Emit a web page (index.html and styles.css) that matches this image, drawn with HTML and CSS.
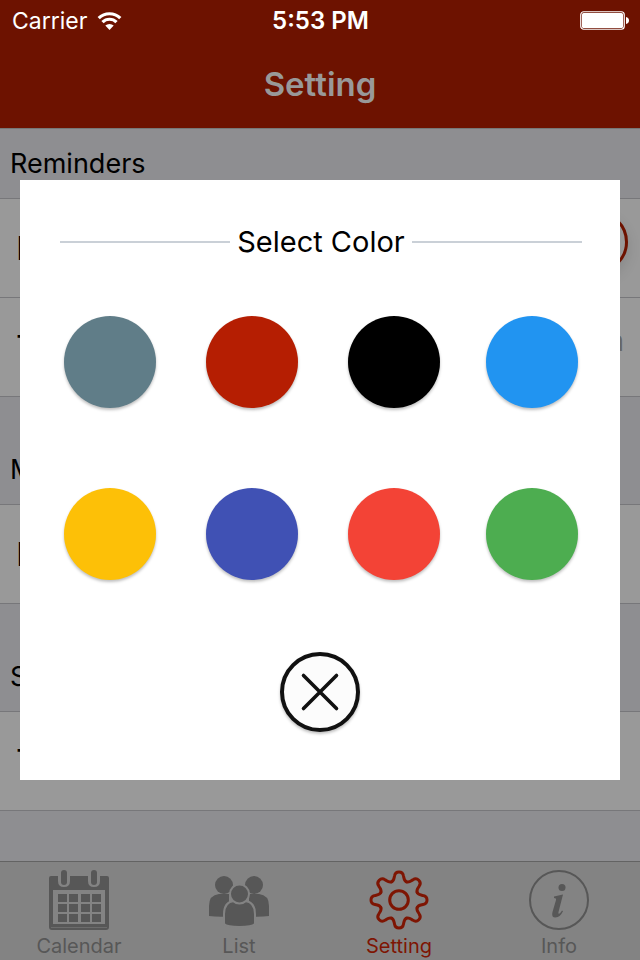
FILE: index.html
```html
<!DOCTYPE html>
<html lang="en">
<head>
<meta charset="utf-8">
<meta name="viewport" content="width=device-width, initial-scale=1">
<title>Setting</title>
<link rel="stylesheet" href="styles.css">
</head>
<body>
<div class="app">
  <header class="top">
    <div class="status">
      <div class="carrier">
        <span>Carrier</span>
        <svg class="wifi" viewBox="0 0 24 18" aria-hidden="true">
          <path d="M1.200 6.200a15.300 15.300 0 0 1 21.600 0M5 10.200a9.800 9.800 0 0 1 14 0" fill="none" stroke="currentColor" stroke-width="3.200"/>
          <path d="M12 18 7.800 13.600a6 6 0 0 1 8.400 0z" fill="currentColor"/>
        </svg>
      </div>
      <span class="time">5:53 PM</span>
      <svg class="battery" viewBox="0 0 49 19" aria-hidden="true">
        <rect x=".75" y=".75" width="43.500" height="17.500" rx="3" fill="none" stroke="currentColor" stroke-width="1.200"/>
        <rect x="2" y="2" width="41" height="15" rx="1.500" fill="currentColor"/>
        <path d="M46 6q3 .8 3 3.500T46 13z" fill="currentColor"/>
      </svg>
    </div>
    <h1 class="title">Setting</h1>
  </header>

  <main class="settings">
    <h2 class="section first">Reminders</h2>
    <div class="row">
      <label for="enabled">E</label>
      <input class="switch" id="enabled" type="checkbox">
    </div>
    <div class="row">
      <span>T</span>
      <span class="value">m</span>
    </div>
    <h2 class="section">M</h2>
    <div class="row"><span>E</span></div>
    <h2 class="section">S</h2>
    <div class="row"><span>T</span></div>
  </main>

  <nav class="tabs">
    <a class="tab" href="#calendar">
      <svg class="icon" viewBox="0 0 60 60" aria-hidden="true">
        <path fill="currentColor" fill-rule="evenodd" d="M2 6h7v5q0 6 6 6t6-6V6h18v5q0 6 6 6t6-6V6h7q2 0 2 2v49q0 3-3 3H3q-3 0-3-3V8q0-2 2-2zM4 20v34h52V20z"/>
        <rect x="12" y="0" width="6" height="15" rx="3" fill="currentColor"/>
        <rect x="42" y="0" width="6" height="15" rx="3" fill="currentColor"/>
        <path fill="currentColor" d="M9 24h9v8H9zM20 24h9v8h-9zM32 24h9v8h-9zM43 24h9v8h-9zM9 34h9v8H9zM20 34h9v8h-9zM32 34h9v8h-9zM43 34h9v8h-9zM9 44h9v8H9zM20 44h9v8h-9zM32 44h9v8h-9zM43 44h9v8h-9z"/>
        <path d="M2 57.500h56" stroke="#6c6c6c" stroke-width="1"/>
      </svg>
      <span>Calendar</span>
    </a>
    <a class="tab" href="#list">
      <svg class="icon" viewBox="0 0 60 60" aria-hidden="true">
        <g fill="currentColor">
          <circle cx="15" cy="15" r="9"/>
          <circle cx="45" cy="15" r="9"/>
          <path d="M0 46V36q0-11 10-12h10v22.500Q8 47 0 46zM60 46V36q0-11-10-12H40v22.500Q52 47 60 46z"/>
        </g>
        <g fill="currentColor" stroke="#838383" stroke-width="2">
          <path d="M15 54V44q0-12 10-13h11q10 1 10 13v10q-3 3-15.500 3T15 54z"/>
          <circle cx="30.500" cy="24" r="9.500"/>
        </g>
      </svg>
      <span>List</span>
    </a>
    <a class="tab active" href="#setting" aria-current="page">
      <svg class="icon" viewBox="-30 -30 60 60" aria-hidden="true">
        <defs>
          <path id="tooth" d="M-7.500-18.200C-5-19.200-5-22-4.500-24-4-27-2.500-28 0-28S4-27 4.500-24C5-22 5-19.200 7.500-18.200"/>
        </defs>
        <g fill="none" stroke="currentColor" stroke-width="3" stroke-linecap="round">
          <use href="#tooth"/>
          <use href="#tooth" transform="rotate(45)"/>
          <use href="#tooth" transform="rotate(90)"/>
          <use href="#tooth" transform="rotate(135)"/>
          <use href="#tooth" transform="rotate(180)"/>
          <use href="#tooth" transform="rotate(225)"/>
          <use href="#tooth" transform="rotate(270)"/>
          <use href="#tooth" transform="rotate(315)"/>
          <circle r="9.300"/>
        </g>
      </svg>
      <span>Setting</span>
    </a>
    <a class="tab" href="#info">
      <svg class="icon" viewBox="0 0 60 60" aria-hidden="true">
        <circle cx="30" cy="30" r="29" fill="none" stroke="currentColor" stroke-width="2"/>
        <circle cx="33" cy="17.500" r="3.500" fill="currentColor"/>
        <path d="M25 26.500 34 24.500 29.500 42q-.5 2.500 1 1.500t2.500-3l1 .8q-3 6.200-7.500 6.200t-3-5.500L27 30q.5-2-2-2z" fill="currentColor"/>
      </svg>
      <span>Info</span>
    </a>
  </nav>

  <section class="dialog" role="dialog" aria-labelledby="dialog-title">
    <h2 class="dialog-title" id="dialog-title">Select Color</h2>
    <div class="swatches">
      <button class="swatch slate" type="button" aria-label="Slate"></button>
      <button class="swatch crimson" type="button" aria-label="Crimson"></button>
      <button class="swatch black" type="button" aria-label="Black"></button>
      <button class="swatch blue" type="button" aria-label="Blue"></button>
      <button class="swatch amber" type="button" aria-label="Amber"></button>
      <button class="swatch indigo" type="button" aria-label="Indigo"></button>
      <button class="swatch red" type="button" aria-label="Red"></button>
      <button class="swatch green" type="button" aria-label="Green"></button>
    </div>
    <button class="close" type="button" aria-label="Close">
      <svg viewBox="0 0 40 40" aria-hidden="true">
        <path d="M3.500 3.500l33 33M36.500 3.500l-33 33" fill="none" stroke="currentColor" stroke-width="3.600" stroke-linecap="round"/>
      </svg>
    </button>
  </section>
</div>
</body>
</html>
```

FILE: styles.css
```css
* { box-sizing: border-box; }

body {
  margin: 0;
  font-family: Inter, Roboto, "Liberation Sans", sans-serif;
  color: #000;
  background: #8e8e91;
}

h1, h2 { margin: 0; font-weight: 400; }

.app {
  position: relative;
  display: flex;
  flex-direction: column;
  min-height: 100vh;
}

/* Navigation bar */
.top {
  background: #6d1200;
  border-bottom: 1px solid #777;
}

.status {
  display: grid;
  grid-template-columns: 1fr auto 1fr;
  align-items: center;
  height: 41px;
  padding: 0 11px 0 12px;
  color: #fff;
  font-size: 24px;
}

.carrier {
  display: flex;
  align-items: center;
  gap: 10px;
  font-size: 23px;
}

.wifi { width: 25px; height: 18px; }
.time { font-weight: 600; }
.battery { width: 49px; height: 19px; justify-self: end; }

.title {
  padding: 22px 0 23px;
  color: #999;
  font-size: 33px;
  font-weight: 600;
  line-height: 42px;
  text-align: center;
}

/* Settings list */
.settings { flex: 1; }

.section {
  padding: 56px 10px 17px;
  border-bottom: 1px solid #77777a;
  font-size: 27px;
  line-height: 34px;
}

.section.first { padding-top: 18px; }

.row {
  display: flex;
  justify-content: space-between;
  align-items: center;
  height: 99px;
  padding: 0 12px 0 16px;
  border-bottom: 1px solid #77777a;
  background: #999;
  font-size: 33px;
}

.value {
  padding: 0 4px 12px 0;
  color: #666;
  font-size: 28px;
}

.switch {
  appearance: none;
  width: 102px;
  height: 62px;
  margin: 0 0 12px;
  border: 3px solid #6d1200;
  border-radius: 31px;
  background: #999;
  box-shadow: 0 6px 14px rgba(0, 0, 0, 0.12);
}

/* Tab bar */
.tabs {
  display: grid;
  grid-template-columns: repeat(4, 1fr);
  height: 99px;
  border-top: 1px solid #636363;
  background: #838383;
}

.tab {
  display: flex;
  flex-direction: column;
  align-items: center;
  gap: 4px;
  padding: 8px 2px 0 0;
  color: #575757;
  font-size: 20px;
  line-height: 24px;
  text-decoration: none;
}

.tab.active { color: #7e1503; }
.icon { width: 60px; height: 60px; }

/* Color picker */
.dialog {
  position: absolute;
  top: 180px;
  left: 20px;
  right: 20px;
  display: flex;
  flex-direction: column;
  padding: 44px 38px 48px 40px;
  background: #fff;
}

.dialog-title {
  display: flex;
  align-items: center;
  gap: 7px;
  font-size: 29px;
  line-height: 36px;
}

.dialog-title::before,
.dialog-title::after {
  content: "";
  flex: 1;
  height: 2px;
  background: #cad0d7;
}

.swatches {
  display: grid;
  grid-template-columns: 71fr 71fr 69fr 92px;
  row-gap: 80px;
  margin: 56px 4px 72px;
}

.swatch {
  width: 92px;
  height: 92px;
  padding: 0;
  border: 0;
  border-radius: 50%;
  box-shadow: 0 2px 3px rgba(0, 0, 0, 0.25);
}

.slate { background: #607d88; }
.crimson { background: #b51e02; }
.black { background: #000; }
.blue { background: #2194f1; }
.amber { background: #fdc007; }
.indigo { background: #4051b4; }
.red { background: #f34336; }
.green { background: #4dad50; }

.close {
  display: grid;
  place-items: center;
  align-self: center;
  width: 80px;
  height: 80px;
  margin-right: 2px;
  padding: 0;
  border: 4px solid #111;
  border-radius: 50%;
  background: #fcfcfc;
  color: #111;
  box-shadow: 0 2px 3px rgba(0, 0, 0, 0.25);
}

.close svg { width: 40px; height: 40px; }
```
